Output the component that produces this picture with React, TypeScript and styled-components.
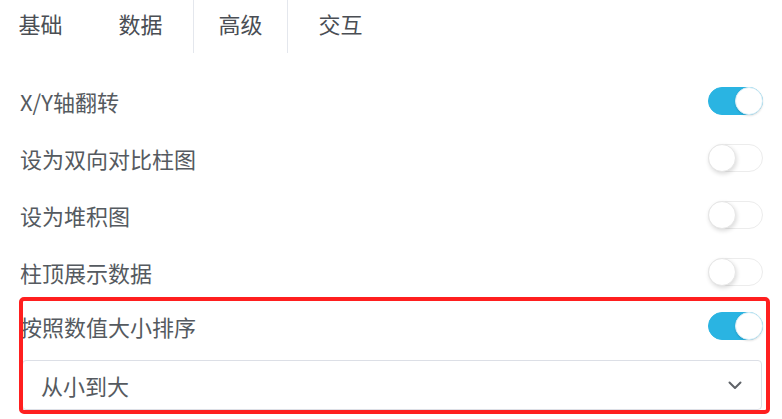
import { useState } from "react";
import styled, { createGlobalStyle } from "styled-components";

const colors = {
  TEXT: "#555a60",
  TAB_TEXT: "#4a4e54",
  LINE: "#e4e7ed",
  BLUE: "#2ab4e2",
  RED: "#ff1f1f",
  WHITE: "#ffffff",
};

const GlobalStyle = createGlobalStyle`
  body {
    margin: 0;
    background: ${colors.WHITE};
    font-family: "Noto Sans CJK SC", "Noto Sans", sans-serif;
  }
`;

const tabs = ["基础", "数据", "高级", "交互"];

const options = [
  { label: "X/Y轴翻转", on: true },
  { label: "设为双向对比柱图", on: false },
  { label: "设为堆积图", on: false },
  { label: "柱顶展示数据", on: false },
];

const Toggle = ({ initial }: { initial: boolean }) => {
  const [on, setOn] = useState(initial);
  return (
    <Track $on={on} onClick={() => setOn(!on)}>
      <Knob $on={on} />
    </Track>
  );
};

const App = () => {
  return (
    <>
      <GlobalStyle />
      <Panel>
        <TabBar>
          {tabs.map((t, i) => (
            <Tab key={t} $active={i === 2}>
              {t}
            </Tab>
          ))}
        </TabBar>
        <OptionList>
          {options.map((o) => (
            <OptionRow key={o.label}>
              <OptionLabel>{o.label}</OptionLabel>
              <Toggle initial={o.on} />
            </OptionRow>
          ))}
          <Highlight>
            <OptionRow $short>
              <OptionLabel>按照数值大小排序</OptionLabel>
              <Toggle initial={true} />
            </OptionRow>
            <SelectBox>
              <span>从小到大</span>
              <svg width="14" height="9" viewBox="0 0 14 9">
                <path
                  d="M1.5 1.5 L7 7 L12.5 1.5"
                  fill="none"
                  stroke="#5f6368"
                  strokeWidth="2"
                  strokeLinecap="round"
                  strokeLinejoin="round"
                />
              </svg>
            </SelectBox>
          </Highlight>
        </OptionList>
      </Panel>
    </>
  );
};

export const Panel = styled.div`
  width: 782px;
  height: 419px;
  padding: 0 19px 0 20px;
  box-sizing: border-box;
  overflow: hidden;
`;

export const TabBar = styled.div`
  display: flex;
  height: 53px;
  margin-left: -27px;
`;

export const Tab = styled.div<{ $active?: boolean }>`
  width: 95px;
  flex-shrink: 0;
  display: flex;
  align-items: center;
  justify-content: center;
  padding-bottom: 7px;
  box-sizing: border-box;
  font-size: 22px;
  color: ${colors.TAB_TEXT};
  border-left: 1px solid ${(p) => (p.$active ? colors.LINE : "transparent")};
  border-right: 1px solid ${(p) => (p.$active ? colors.LINE : "transparent")};
  margin-right: 5px;
`;

export const OptionList = styled.div`
  margin-top: 19px;
  display: flex;
  flex-direction: column;
`;

export const OptionRow = styled.div<{ $short?: boolean }>`
  height: ${(p) => (p.$short ? 52 : 57)}px;
  display: flex;
  align-items: center;
  justify-content: space-between;
`;

export const OptionLabel = styled.span`
  font-size: 22px;
  color: ${colors.TEXT};
  line-height: 1;
`;

export const Track = styled.div<{ $on: boolean }>`
  position: relative;
  width: 55px;
  height: 28px;
  border-radius: 14px;
  box-sizing: border-box;
  background: ${(p) => (p.$on ? colors.BLUE : colors.WHITE)};
  border: 1px solid ${(p) => (p.$on ? colors.BLUE : "#ececec")};
  cursor: pointer;
`;

export const Knob = styled.div<{ $on: boolean }>`
  position: absolute;
  top: -1px;
  left: ${(p) => (p.$on ? "26px" : "-1px")};
  width: 28px;
  height: 28px;
  border-radius: 50%;
  background: ${colors.WHITE};
  box-sizing: border-box;
  border: 1px solid ${(p) => (p.$on ? "#d8eef7" : "#e6e6e6")};
  box-shadow: ${(p) =>
    p.$on ? "0 1px 2px rgba(0,0,0,0.12)" : "1px 2px 4px rgba(0,0,0,0.14)"};
`;

export const Highlight = styled.div`
  position: relative;
  &::after {
    content: "";
    position: absolute;
    top: -3px;
    bottom: -4px;
    left: -1px;
    right: -7px;
    border: 4px solid ${colors.RED};
    border-radius: 5px;
    pointer-events: none;
  }
`;

export const SelectBox = styled.div`
  margin: 8px 1px 0 2px;
  height: 50px;
  box-sizing: border-box;
  display: flex;
  align-items: center;
  justify-content: space-between;
  padding: 0 19px 0 18px;
  border: 1px solid #dcdfe6;
  border-radius: 4px;
  font-size: 22px;
  color: ${colors.TEXT};
`;

export default App;
